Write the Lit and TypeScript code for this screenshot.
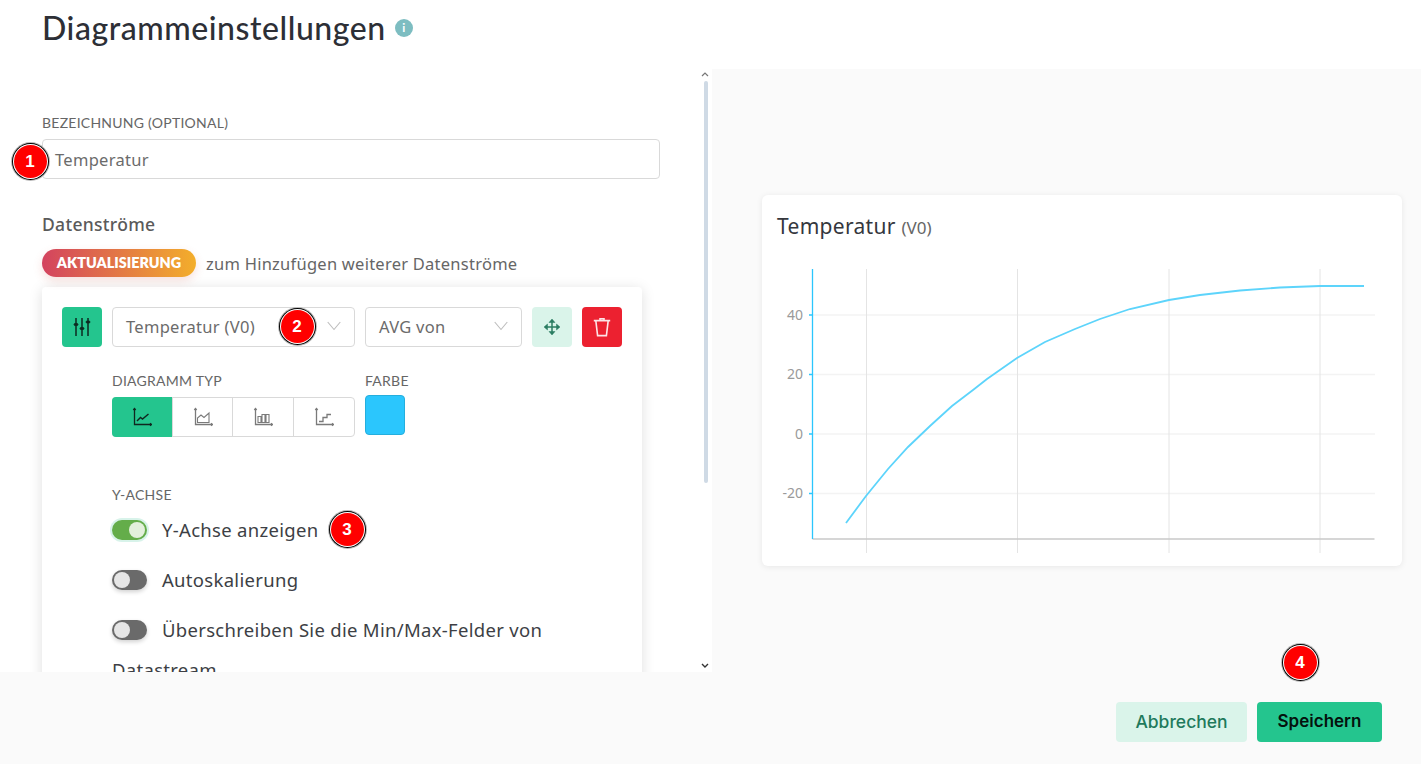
import { LitElement, html, css, svg } from "lit";
import { customElement } from "lit/decorators.js";

const curve =
  "846,523 866,496 888,469 908,447 930,426 952,406 973,390 987,379 1017,358 1045,342 1075,329 1100,319 1130,309 1169,300 1200,295 1240,290.5 1280,287.5 1320,286 1364,286";

const chevron = html`<svg class="chev" width="14" height="10" viewBox="0 0 14 10"><path d="M.7 1 7 8.500 13.300 1" fill="none" stroke="#bdbdbd" stroke-width="1.1"/></svg>`;

const axes = svg`<path d="M2.500 1.500v16h17M1.300 3 2.500 1.500 3.700 3M18 16.300l1.500 1.200-1.500 1.200" fill="none" stroke-width="1.3"/>`;

@customElement("app-root")
export class AppRoot extends LitElement {
  static styles = css`
    :host { display: block; width: 100%; height: 100vh; min-height: 764px; position: relative; overflow: hidden; background: #fff; font-family: "Noto Sans", sans-serif; color: #666; }
    * { box-sizing: border-box; }
    .page { display: flex; flex-direction: column; height: 764px; }
    .head { height: 69px; flex: none; display: flex; align-items: center; gap: 9px; padding: 0 42px 14px; }
    h1 { margin: 0; font: 500 32px/40px "Lato", sans-serif; color: #2d2f36; letter-spacing: 0.55px; }
    .info { width: 18px; height: 18px; border-radius: 50%; background: #7dbdc1; color: #fff; display: flex; align-items: center; justify-content: center; font: 700 12px/1 "Lato", sans-serif; }
    .main { flex: 1; min-height: 0; display: flex; }
    .left { width: 712px; flex: none; display: flex; }
    .scroll { width: 700px; overflow: hidden; padding: 45px 0 0 42px; }
    .bar { width: 12px; display: flex; flex-direction: column; align-items: center; padding: 2px 0 3px; }
    .thumb { width: 4px; height: 402px; background: #cfdae5; border-radius: 2px; margin-top: 4px; }
    .bar svg { flex: none; margin-right: 2px; }
    .bar svg:last-child { margin-top: auto; }
    .lab { font-size: 14px; line-height: 17px; color: #666; text-transform: uppercase; font-family: "Lato", sans-serif; letter-spacing: 0.25px; }
    .input { margin-top: 8px; width: 618px; height: 40px; border: 1px solid #d9d9d9; border-radius: 4px; display: flex; align-items: center; padding-left: 12px; font-size: 16.5px; letter-spacing: 0.3px; color: #6b6b6b; }
    h2 { margin: 33px 0 0; font-size: 17.5px; line-height: 24px; font-weight: 500; color: #5a5a5a; letter-spacing: 0.3px; }
    .upg { display: flex; align-items: center; gap: 10px; margin-top: 13px; font-size: 16.5px; letter-spacing: 0.25px; color: #666; height: 28px; }
    .pill { width: 154px; height: 28px; border-radius: 14px; background: linear-gradient(90deg, #d3435f, #f3ae2b); color: #fff; font: 800 14.4px/28px "Lato", sans-serif; letter-spacing: 0; text-align: center; box-shadow: 0 4px 10px rgba(210,90,70,.18); }
    .card { margin-top: 10px; width: 600px; min-height: 480px; background: #fff; border-radius: 4px; box-shadow: 0 2px 14px rgba(0,0,0,.13); padding: 20px; }
    .row { display: flex; gap: 10px; }
    .ib { width: 40px; height: 40px; border-radius: 4px; display: flex; align-items: center; justify-content: center; flex: none; }
    .green { background: #24c58e; }
    .mint { background: #daf4ea; }
    .red { background: #ec2130; }
    .sel { height: 40px; border: 1px solid #d9d9d9; border-radius: 4px; display: flex; align-items: center; justify-content: space-between; padding: 0 13px 2px 13px; font-size: 16.5px; letter-spacing: 0.3px; color: #6b6b6b; }
    .s1 { width: 243px; }
    .s2 { width: 157px; }
    .opts { display: flex; gap: 10px; margin: 25px 0 0 50px; }
    .opts .lab { height: 18px; }
    .seg { margin-top: 7px; width: 243px; height: 40px; border: 1px solid #d9d9d9; border-radius: 4px; display: flex; }
    .seg div { flex: 1; display: flex; align-items: center; justify-content: center; border-left: 1px solid #d9d9d9; }
    .seg div:first-child { width: 60px; flex: none; margin: -1px 0 -1px -1px; background: #24c58e; border: 0; border-radius: 4px 0 0 4px; }
    .seg div:nth-child(2) { width: 60px; flex: none; }
    .swatch { margin-top: 5px; width: 40px; height: 40px; background: #2bc6fd; border: 1px solid #25aedd; border-radius: 4px; }
    .yl { margin: 49px 0 0 50px; }
    .opt { margin: 7px 0 0 50px; width: 510px; font-size: 18.5px; letter-spacing: 0.3px; line-height: 40px; color: #3d3f45; }
    .opt + .opt { margin-top: 10px; }
    .tg { display: inline-block; vertical-align: -3px; width: 35px; height: 20px; border-radius: 10px; background: #6a6a6a; margin-right: 15px; padding: 2px; box-shadow: 0 2px 4px rgba(0,0,0,.18); }
    .tg i { display: block; width: 16px; height: 16px; border-radius: 50%; background: #e6e6e6; }
    .tg.on { background: #64ad4a; box-shadow: 0 0 0 2px #d8f3ea; }
    .tg.on i { margin-left: 15px; background: #e3f0dc; }
    .right { flex: 1; background: #fafafa; padding: 126px 19px 0 50px; }
    .chart { height: 371px; background: #fff; border-radius: 6px; box-shadow: 0 1px 6px rgba(0,0,0,.08); position: relative; padding: 16px 15px 0; }
    .ct { font-size: 21px; line-height: 30px; color: #35373d; letter-spacing: 0.3px; }
    .ct span { font-size: 17px; letter-spacing: 0; color: #666; }
    .plot { display: block; position: absolute; left: 0; top: 0; }
    .plot text { font: 14px "Noto Sans", sans-serif; fill: #9a9a9a; text-anchor: end; }
    .foot { height: 92px; flex: none; background: #fafafa; display: flex; justify-content: flex-end; gap: 10px; padding: 30px 39px 0 0; }
    .btn { height: 40px; padding-bottom: 2px; border-radius: 4px; display: flex; align-items: center; justify-content: center; font: 500 17.5px "Inter", sans-serif; }
    .cancel { width: 131px; background: #daf4ea; color: #1f7a5c; }
    .save { width: 125px; background: #24c58e; color: #04120d; font-weight: 600; font-size: 17px; }
    .badge { position: absolute; width: 33px; height: 33px; margin: -16.5px 0 0 -16.5px; border-radius: 50%; background: #f00; color: #fff; font: 700 17px/33px "Liberation Sans", sans-serif; text-align: center; box-shadow: 0 0 0 1px #fff, 0 0 0 2px #000, 0 0 0 3px #bbb; }
    .b1 { left: 30px; top: 161px; }
    .b2 { left: 297px; top: 326px; }
    .b3 { left: 347px; top: 529px; }
    .b4 { left: 1300px; top: 662px; }
  `;

  render() {
    return html`
      <div class="page">
        <header class="head"><h1>Diagrammeinstellungen</h1><span class="info">i</span></header>
        <div class="main">
          <section class="left">
            <div class="scroll">
              <div class="lab">Bezeichnung (optional)</div>
              <div class="input">Temperatur</div>
              <h2>Datenströme</h2>
              <div class="upg"><span class="pill">AKTUALISIERUNG</span><span>zum Hinzufügen weiterer Datenströme</span></div>
              <div class="card">
                <div class="row">
                  <div class="ib green">
                    <svg width="20" height="20" viewBox="0 0 20 20" fill="#0d2a20" stroke="#0d2a20" stroke-width="1.5">
                      <path d="M4 1v18M10 1v18M16 1v18" fill="none"/>
                      <rect x="2" y="6.500" width="4" height="2" rx="1" stroke-width=".8"/>
                      <rect x="8" y="10.500" width="4" height="2" rx="1" stroke-width=".8"/>
                      <rect x="14" y="4" width="4" height="2" rx="1" stroke-width=".8"/>
                    </svg>
                  </div>
                  <div class="sel s1">Temperatur (V0)${chevron}</div>
                  <div class="sel s2">AVG von${chevron}</div>
                  <div class="ib mint">
                    <svg width="18" height="18" viewBox="0 0 18 18" fill="#2b7d62" stroke="#2b7d62" stroke-width="1.5"><path d="M9 2v14M2 9h14" fill="none"/><path d="M6 4.500 9 1l3 3.500zM6 13.500 9 17l3-3.500zM4.500 6 1 9l3.500 3zM13.500 6 17 9l-3.500 3z" stroke-width=".5"/></svg>
                  </div>
                  <div class="ib red">
                    <svg width="18" height="20" viewBox="0 0 18 20" fill="none" stroke="#fde4e6" stroke-width="1.6"><path d="M.8 3.600h16.400M7 3.300V1.800h4v1.500M2.800 3.600 4.600 18.600h8.800l1.800-15"/></svg>
                  </div>
                </div>
                <div class="opts">
                  <div>
                    <div class="lab">Diagramm Typ</div>
                    <div class="seg">
                      <div><svg width="20" height="20" viewBox="0 0 20 20" fill="none" stroke="#10271f">${axes}<path d="M5 14l3.500-3.500 2 1.500L16.500 7" stroke-width="1.4"/></svg></div>
                      <div><svg width="20" height="20" viewBox="0 0 20 20" fill="none" stroke="#7a7a7a">${axes}<path d="M4.500 15.500V11l3.500-3 3 2.500 5-4.500v9.500z" stroke-width="1.1"/></svg></div>
                      <div><svg width="20" height="20" viewBox="0 0 20 20" fill="none" stroke="#7a7a7a">${axes}<path d="M5 9.500h3v6H5zM9 7.500h3v8H9zM13 7.500h3v8h-3z" stroke-width="1.1"/></svg></div>
                      <div><svg width="20" height="20" viewBox="0 0 20 20" fill="none" stroke="#7a7a7a">${axes}<path d="M5 14.500h4v-4h4V7.500h4" stroke-width="1.3"/></svg></div>
                    </div>
                  </div>
                  <div>
                    <div class="lab">Farbe</div>
                    <div class="swatch"></div>
                  </div>
                </div>
                <div class="lab yl">Y-Achse</div>
                <div class="opt"><span class="tg on"><i></i></span>Y-Achse anzeigen</div>
                <div class="opt"><span class="tg"><i></i></span>Autoskalierung</div>
                <div class="opt"><span class="tg"><i></i></span>Überschreiben Sie die Min/Max-Felder von Datastream</div>
              </div>
            </div>
            <div class="bar">
              <svg width="8" height="6" viewBox="0 0 8 6"><path d="M1 5l3-3 3 3" fill="none" stroke="#777" stroke-width="1.2"/></svg>
              <div class="thumb"></div>
              <svg width="8" height="6" viewBox="0 0 8 6"><path d="M1 1l3 3 3-3" fill="none" stroke="#333" stroke-width="1.4"/></svg>
            </div>
          </section>
          <section class="right">
            <div class="chart">
              <div class="ct">Temperatur <span>(V0)</span></div>
              <svg class="plot" width="640" height="371" viewBox="762 195 640 371">
                <g stroke="#f3f3f3" stroke-width="1.5">
                  <path d="M813 315h562M813 374.500h562M813 434h562M813 493.500h562"/>
                </g>
                <g stroke="#e4e4e4" stroke-width="1">
                  <path d="M866.500 269v284M1017.500 269v284M1169 269v284M1320 269v284"/>
                </g>
                <path d="M812.500 539h562" stroke="#c9c9c9" stroke-width="1.4"/>
                <path d="M812.500 269v270M809 315h3M809 374.500h3M809 434h3M809 493.500h3" stroke="#2bc6fd" stroke-width="1.3" fill="none"/>
                <polyline points=${curve} fill="none" stroke="#5dd4fb" stroke-width="1.8"/>
                <text x="803" y="320">40</text>
                <text x="803" y="379">20</text>
                <text x="803" y="439">0</text>
                <text x="803" y="498">-20</text>
              </svg>
            </div>
          </section>
        </div>
        <footer class="foot">
          <div class="btn cancel">Abbrechen</div>
          <div class="btn save">Speichern</div>
        </footer>
      </div>
      <span class="badge b1">1</span>
      <span class="badge b2">2</span>
      <span class="badge b3">3</span>
      <span class="badge b4">4</span>
    `;
  }
}
